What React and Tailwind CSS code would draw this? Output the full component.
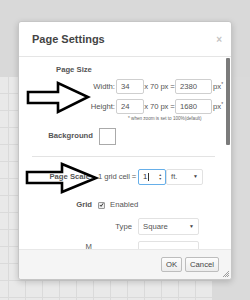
import React from 'react';

function Box({ w, children, className = '' }) {
  return (
    <div className={`h-[15px] border border-[#cfcfcf] rounded-[2px] bg-white flex items-center pl-[4px] text-[#555] ${w} ${className}`}>
      {children}
    </div>
  );
}

function Caret() {
  return <span className="ml-auto mr-[4px] text-[5px] text-[#444]">▼</span>;
}

function Arrow({ points }) {
  return (
    <polygon points={points} fill="none" stroke="#000" strokeWidth="2.6" strokeLinejoin="miter" />
  );
}

export default function App() {
  return (
    <div className="w-[250px] h-[300px] relative overflow-hidden font-['Liberation_Sans',Arial,sans-serif] text-[7.7px] text-[#555] whitespace-nowrap">
      {/* page behind the dialog */}
      <div className="flex flex-col h-full">
        <div className="h-[77px] bg-[#d9d9d9]" />
        <div className="flex-1 flex">
          <div className="w-[212px] bg-[#e9e9e9] bg-[linear-gradient(to_right,#dadada_1px,transparent_1px),linear-gradient(to_bottom,#dadada_1px,transparent_1px)] [background-size:17px_17px] [background-position:8px_16px]" />
          <div className="flex-1 bg-[#dadada]" />
        </div>
      </div>

      {/* dialog */}
      <div className="absolute left-[18px] top-[21px] w-[214px] h-[259px] bg-white border border-[#c6c6c6] rounded-[3px] shadow-[0_2px_6px_rgba(0,0,0,0.18)] flex flex-col">
        <div className="h-[35px] border-b border-[#e5e5e5] flex items-center justify-between pl-[13px] pr-[9px] shrink-0">
          <span className="text-[11px] font-bold text-[#444]">Page Settings</span>
          <span className="text-[10px] text-[#c4c4c4] font-bold">×</span>
        </div>

        <div className="flex-1 relative overflow-hidden">
          <div className="absolute right-[1px] top-[1px] w-[4px] h-[87px] bg-[#7b7b7b] rounded-[1px]" />

          <div className="h-[14px] mt-[6px] flex items-center pl-[37px] font-bold text-[#555]">Page Size</div>

          <div className="h-[15px] mt-[2px] flex items-center">
            <span className="w-[97px] text-right pr-[1px]">Width:</span>
            <Box w="w-[28px]">34</Box>
            <span className="w-[31px] text-center tracking-[-0.1px]">x 70 px =</span>
            <Box w="w-[37px]">2380</Box>
            <span className="ml-[1px]">px<sup className="text-[5px]">*</sup></span>
          </div>

          <div className="h-[15px] mt-[5px] flex items-center">
            <span className="w-[97px] text-right pr-[1px]">Height:</span>
            <Box w="w-[28px]">24</Box>
            <span className="w-[31px] text-center tracking-[-0.1px]">x 70 px =</span>
            <Box w="w-[37px]">1680</Box>
            <span className="ml-[1px]">px<sup className="text-[5px]">*</sup></span>
          </div>

          <div className="h-[6px] mt-[2px] pl-[109px] flex items-center text-[4.6px] text-[#666]">
            * when zoom is set to 100%(default)
          </div>

          <div className="h-[16px] mt-[6px] flex items-center">
            <span className="w-[74px] text-right font-bold text-[#555]">Background</span>
            <div className="ml-[6px] w-[17px] h-[17px] border border-[#aaa] bg-white" />
          </div>

          <div className="mt-[12px] ml-[13px] w-[183px] h-px bg-[#e3e3e3]" />

          <div className="h-[16px] mt-[12px] flex items-center">
            <span className="w-[71px] text-right font-bold text-[#555]">Page Scale</span>
            <span className="ml-[8px] w-[40px] tracking-[-0.1px]">1 grid cell =</span>
            <div className="w-[28px] h-[16px] border border-[#66afe9] rounded-[2px] flex items-center pl-[4px] text-[#333]">
              1<span className="w-px h-[8px] bg-[#333] ml-px" />
              <span className="ml-auto mr-[3px] flex flex-col text-[3.5px] leading-[4px] text-[#555]">
                <span>▲</span>
                <span>▼</span>
              </span>
            </div>
            <div className="w-[37px] h-[16px] border border-[#e2e2e2] rounded-[2px] flex items-center pl-[4px]">
              ft.
              <Caret />
            </div>
          </div>

          <div className="h-[12px] mt-[14px] flex items-center">
            <span className="w-[73px] text-right font-bold text-[#555]">Grid</span>
            <span className="ml-[6px] w-[7px] h-[7px] border border-[#999] bg-[#eee] rounded-[1px] flex items-center justify-center">
              <svg width="6" height="6" viewBox="0 0 6 6">
                <path d="M1 3 L2.5 4.6 L5 1" fill="none" stroke="#333" strokeWidth="1.2" />
              </svg>
            </span>
            <span className="ml-[5px]">Enabled</span>
          </div>

          <div className="h-[17px] mt-[7px] flex items-center">
            <span className="w-[113px] text-right">Type</span>
            <div className="ml-[6px] w-[61px] h-[17px] border border-[#e2e2e2] rounded-[2px] flex items-center pl-[4px]">
              Square
              <Caret />
            </div>
          </div>

          <div className="h-[10px] mt-[6px] flex items-start">
            <span className="w-[73px] text-right leading-[9px] pt-[1px]">M</span>
            <div className="ml-[46px] w-[61px] h-[17px] border border-[#e2e2e2] rounded-[2px]" />
          </div>
        </div>

        <div className="h-[30px] shrink-0 bg-[#f5f5f5] border-t border-[#e8e8e8] flex items-center justify-end pr-[12px] gap-[3px] relative rounded-b-[3px]">
          <button className="h-[15px] w-[21px] border border-[#bdbdbd] rounded-[2px] bg-[linear-gradient(#fdfdfd,#ececec)] text-[7.7px] text-[#444]">OK</button>
          <button className="h-[15px] w-[34px] border border-[#bdbdbd] rounded-[2px] bg-[linear-gradient(#fdfdfd,#ececec)] text-[7.7px] text-[#444]">Cancel</button>
          <svg className="absolute right-[1px] bottom-[1px]" width="8" height="8" viewBox="0 0 8 8">
            <path d="M7 1 L1 7 M7 3 L3 7 M7 5 L5 7" stroke="#888" strokeWidth="0.8" />
          </svg>
        </div>
      </div>

      {/* annotation arrows */}
      <svg className="absolute left-0 top-0 pointer-events-none" width="250" height="300" viewBox="0 0 250 300">
        <Arrow points="28,92 58,92 58,83 88,97 58,112 58,103 28,103" />
        <Arrow points="27,172 62,172 62,164 96,178 62,192 62,183 27,183" />
      </svg>
    </div>
  );
}
